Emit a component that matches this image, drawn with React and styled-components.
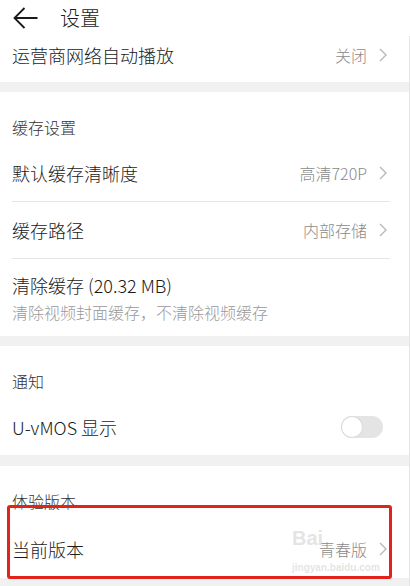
import React from "react";
import styled, { createGlobalStyle } from "styled-components";

const GlobalStyle = createGlobalStyle`
  html, body { margin: 0; padding: 0; background: #ffffff; }
  body { font-family: "Noto Sans CJK SC", "Noto Sans", sans-serif; font-weight: 300; color: #1a1a1a; }
  * { box-sizing: border-box; }
`;

const Page = styled.div`
  position: relative;
  width: 410px;
  height: 586px;
  overflow: hidden;
  background: #fff;
`;

const Header = styled.div`
  height: 36px;
  display: flex;
  align-items: center;
  padding-left: 13px;
  gap: 22px;
`;

const Title = styled.div`
  font-size: 20px;
  line-height: 28px;
  color: #1a1a1a;
`;

const List = styled.div`
  border-right: 1px solid #e4e4e4;
  display: flex;
  flex-direction: column;
`;

const Band = styled.div`
  height: ${(p) => p.$h || 10}px;
  background: #f1f1f1;
`;

const SectionHeader = styled.div`
  height: 53px;
  padding: 24px 0 7px 12px;
  font-size: 16px;
  line-height: 22px;
  color: #333;
`;

const Row = styled.div`
  height: ${(p) => p.$h || 56}px;
  margin: 0 19px 0 12px;
  padding-bottom: ${(p) => p.$pb || 0}px;
  display: flex;
  align-items: center;
  justify-content: space-between;
  border-bottom: ${(p) => (p.$divider ? "1px solid #e6e6e6" : "none")};
  flex: none;
`;

const TwoLine = styled.div`
  height: 77px;
  margin: 0 19px 0 12px;
  display: flex;
  flex-direction: column;
  justify-content: center;
  gap: 3px;
`;

const Label = styled.div`
  font-size: 18px;
  line-height: 26px;
  color: #1a1a1a;
  white-space: nowrap;
`;

const SubLabel = styled.div`
  font-size: 16px;
  line-height: 22px;
  color: #999;
  white-space: nowrap;
`;

const Right = styled.div`
  display: flex;
  align-items: center;
  gap: 12px;
  margin-right: 3px;
`;

const Value = styled.span`
  font-size: 16px;
  line-height: 22px;
  color: #8a8a8a;
`;

const Toggle = styled.div`
  width: 42px;
  height: 22px;
  border-radius: 11px;
  background: #e4e4e4;
  margin-right: 7px;
  padding: 1px;
  display: flex;
  align-items: center;
`;

const Knob = styled.div`
  width: 20px;
  height: 20px;
  border-radius: 50%;
  background: #fff;
  box-shadow: 0 0 0 1px #dcdcdc;
`;

const Highlight = styled.div`
  position: absolute;
  left: 7px;
  top: 505px;
  width: 385px;
  height: 74px;
  border: 3px solid #e2231c;
  border-radius: 3px;
  pointer-events: none;
`;

const Watermark = styled.div`
  position: absolute;
  left: 292px;
  top: 527px;
  display: flex;
  flex-direction: column;
  align-items: flex-start;
  color: rgba(205, 205, 205, 0.55);
  font-family: "Liberation Sans", Arial, sans-serif;
  pointer-events: none;
`;

const WmBig = styled.div`
  font-size: 20px;
  font-weight: bold;
  line-height: 22px;
`;

const WmSmall = styled.div`
  font-size: 10px;
  font-weight: bold;
  line-height: 12px;
  margin-top: 13px;
  margin-left: 0px;
`;

const Chevron = () => (
  <svg width="8" height="14" viewBox="0 0 8 14" fill="none">
    <path d="M1 1 L7 7 L1 13" stroke="#b8b8b8" strokeWidth="1.4" strokeLinejoin="miter" />
  </svg>
);

const BackArrow = () => (
  <svg width="25" height="22" viewBox="0 0 25 22" fill="none">
    <path d="M24.5 11 H1.5 M11.5 1 L1.5 11 L11.5 21" stroke="#1a1a1a" strokeWidth="1.8" />
  </svg>
);

export default function App() {
  return (
    <>
      <GlobalStyle />
      <Page>
        <Header>
          <BackArrow />
          <Title>设置</Title>
        </Header>
        <List>
          <Row $h={46} $pb={8}>
            <Label>运营商网络自动播放</Label>
            <Right>
              <Value>关闭</Value>
              <Chevron />
            </Right>
          </Row>
          <Band />
          <SectionHeader>缓存设置</SectionHeader>
          <Row $h={57} $divider>
            <Label>默认缓存清晰度</Label>
            <Right>
              <Value>高清720P</Value>
              <Chevron />
            </Right>
          </Row>
          <Row $h={57} $divider>
            <Label>缓存路径</Label>
            <Right>
              <Value>内部存储</Value>
              <Chevron />
            </Right>
          </Row>
          <TwoLine>
            <Label>清除缓存 (20.32 MB)</Label>
            <SubLabel>清除视频封面缓存，不清除视频缓存</SubLabel>
          </TwoLine>
          <Band />
          <SectionHeader>通知</SectionHeader>
          <Row $h={56}>
            <Label>U-vMOS 显示</Label>
            <Toggle>
              <Knob />
            </Toggle>
          </Row>
          <Band $h={11} />
          <SectionHeader>体验版本</SectionHeader>
          <Row $h={59}>
            <Label>当前版本</Label>
            <Right>
              <Value>青春版</Value>
              <Chevron />
            </Right>
          </Row>
          <Band $h={20} />
        </List>
        <Watermark>
          <WmBig>Bai</WmBig>
          <WmSmall>jingyan.baidu.com</WmSmall>
        </Watermark>
        <Highlight />
      </Page>
    </>
  );
}
